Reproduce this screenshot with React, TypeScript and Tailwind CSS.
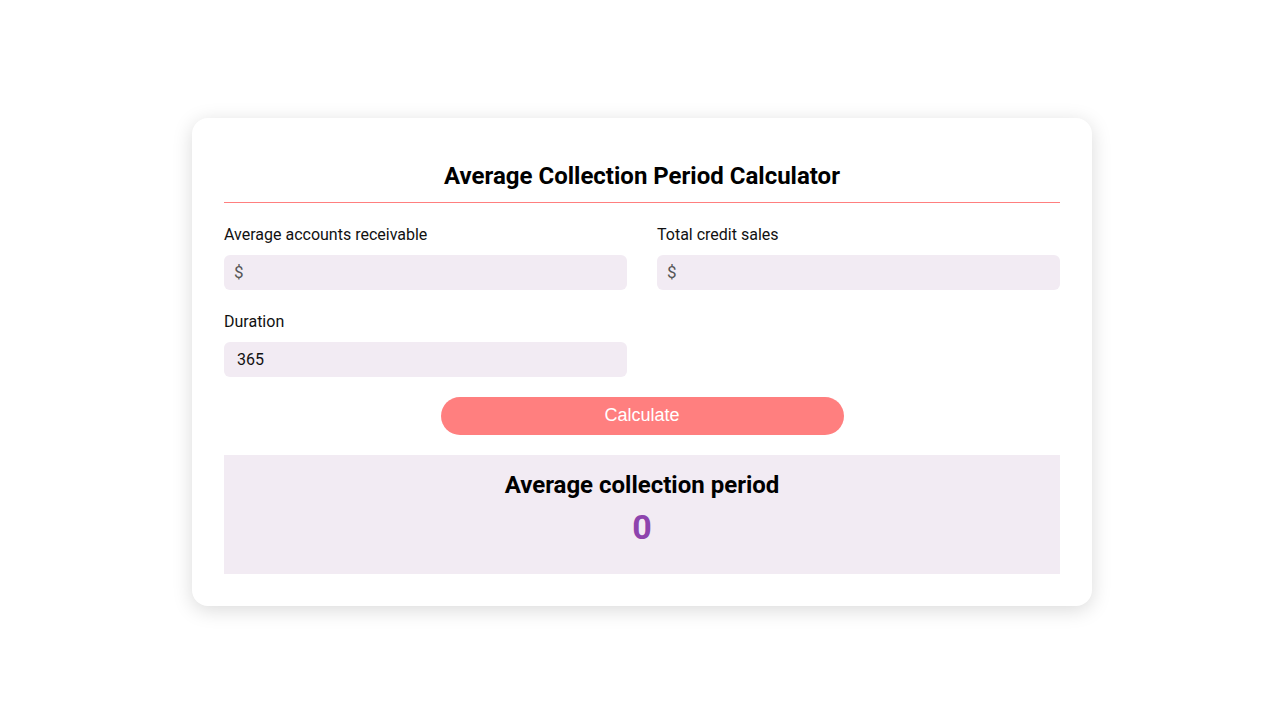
export default function App() {
  return (
    <div className="w-[1280px] h-[720px] bg-white flex items-start justify-center pt-[118px] pl-[4px]" style={{ fontFamily: 'Roboto, "Liberation Sans", sans-serif' }}>
      <div className="w-[900px] bg-white rounded-2xl shadow-[0_4px_20px_rgba(0,0,0,0.15)] px-8 pt-[32px] pb-8">
        {/* Title */}
        <h1 className="text-center text-[24px] font-bold text-black leading-[36px] pt-[8px] pb-[8px]">
          Average Collection Period Calculator
        </h1>
        <div className="h-px bg-[#ff7f7f]" />

        {/* Inputs */}
        <div className="grid grid-cols-2 gap-x-[30px] mt-[19px]">
          <div className="flex flex-col">
            <label className="text-[16px] text-[#111] leading-[24px] pt-px">Average accounts receivable</label>
            <div className="mt-[8px] h-[35px] rounded-md bg-[#f2ebf3] flex items-center px-[10px] text-[17px] text-[#555]">$</div>
          </div>
          <div className="flex flex-col">
            <label className="text-[16px] text-[#111] leading-[24px] pt-px">Total credit sales</label>
            <div className="mt-[8px] h-[35px] rounded-md bg-[#f2ebf3] flex items-center px-[10px] text-[17px] text-[#555]">$</div>
          </div>
          <div className="flex flex-col mt-[19px]">
            <label className="text-[16px] text-[#111] leading-[24px] pt-px">Duration</label>
            <div className="mt-[8px] h-[35px] rounded-md bg-[#f2ebf3] flex items-center px-[13px] text-[16px] text-[#111]">365</div>
          </div>
        </div>

        {/* Button */}
        <div className="flex justify-center mt-[20px]">
          <button className="w-[403px] h-[38px] rounded-full bg-[#ff7f7f] text-white text-[18px] leading-[20px] pb-[3px]" style={{ fontFamily: '"Liberation Sans", Arial, sans-serif' }}>
            Calculate
          </button>
        </div>

        {/* Result */}
        <div className="mt-[20px] h-[119px] bg-[#f2ebf3] flex flex-col items-center pt-[14px]">
          <h2 className="text-[24px] font-bold text-black leading-[32px]">Average collection period</h2>
          <div className="text-[34px] font-bold text-[#8e44ad] leading-[40px] mt-[6px]">0</div>
        </div>
      </div>
    </div>
  );
}
